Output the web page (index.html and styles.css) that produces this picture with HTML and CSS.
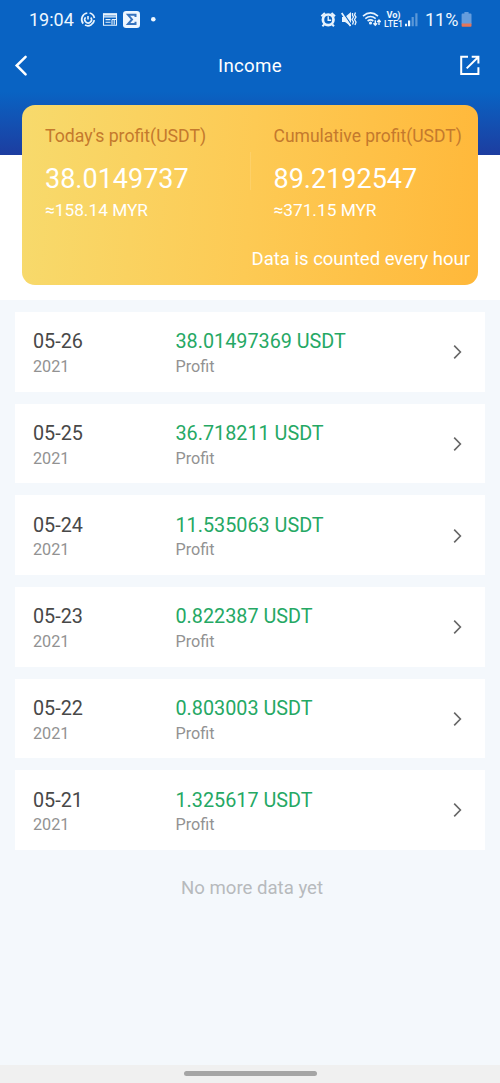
FILE: index.html
```html
<!DOCTYPE html>
<html lang="en">
<head>
<meta charset="utf-8">
<title>Income</title>
<link rel="stylesheet" href="styles.css">
</head>
<body>
<div class="screen">
  <div class="hero">
    <div class="status">
      <span class="clock">19:04</span>
      <svg class="status-left" width="80" height="28" viewBox="78 6 80 28" fill="none" stroke="#e8f3fd">
        <path d="M87.3 13A6.5 6.5 0 0 0 83.2 23.6M85 25.1A6.5 6.5 0 0 0 94.3 20.2M94.4 18A6.5 6.5 0 0 0 89.6 13" stroke-width="1.7"/>
        <path d="M85.6 17.2A3.4 3.4 0 1 0 90.8 17.4M88 16v3.5" stroke-width="1.6"/>
        <path d="M103.5 13.7h13v11.5h-13zM103.5 16.9h13M105.5 19.6h5M105.5 22.2h5M112 19.5h4M112 19.5v5M114.2 19.5v5" stroke-width="1.1"/>
        <path d="M103 14.6h14" stroke-width="2"/>
        <rect x="123" y="11" width="17" height="17" rx="3.2" fill="#eef7ff" stroke="none"/>
        <path d="M135.5 17v-2.2h-7.5l4 4.6-4 4.6h7.5v-2.2" stroke="#3774be" stroke-width="2"/>
        <circle cx="153.3" cy="19.3" r="2.3" fill="#eef7ff" stroke="none"/>
      </svg>
      <div class="status-right">
        <svg width="62" height="28" viewBox="320 6 62 28" fill="none" stroke="#e8f3fd">
          <circle cx="329.2" cy="19.8" r="5.3" stroke-width="2.7"/><path d="M329.2 16.3v3.9h3" stroke-width="1.4"/><path d="M322.4 16.2l3.5-3.3M336 16.2l-3.5-3.3M325.2 24.5l-1.8 1.8M333.2 24.5l1.8 1.8" stroke-width="2"/>
          <path d="M343 17h3l6-5v14.2L346 22h-3z" fill="#e8f3fd" stroke="none"/>
          <path d="M344 12.6l8.8 12.8" stroke="#0963c3" stroke-width="1.3"/><path d="M342.7 13.1l8.8 12.8" stroke-width="1.7"/>
          <path d="M353.5 13v2.3l1 1.7-1.5 2.5 1.5 2.3-1 2.7M356.5 12.5l-1 2.5 1.5 2-1.5 2.5 1.5 2.5-1 3" stroke-width="1.3"/>
          <path d="M364 16.2Q371.5 9.7 379 16.2M366.3 18.6Q371.5 14.4 376.7 18.6M368.6 21Q371.5 18.8 374.3 21" stroke-width="1.6"/>
          <circle cx="371.5" cy="23" r="1.6" fill="#e8f3fd" stroke="none"/>
          <path d="M376.3 20.3v5M374.5 23.3l1.8 2 1.8-2M380 25v-5M378.2 22l1.8-2 1.8 2" stroke-width="1.4"/>
        </svg>
        <span class="network"><span class="volte">Vo)</span><span>LTE1</span></span>
        <svg width="14" height="28" viewBox="405 6 14 28"><path fill="#eef7ff" d="M406 23.7h2v2.5h-2zM409 20.6h2.2v5.6H409z"/><path fill="#5c98d8" d="M412.6 17h2.2v9.2h-2.2zM416.3 13.3h2.2v12.9h-2.2z"/></svg>
        <span class="percent">11%</span>
        <svg width="12" height="28" viewBox="460 6 12 28"><path d="M464.4 12h4.2v1.5h1.9q1 0 1 1v9.5h-9.9v-9.5q0-1 1-1h1.8z" fill="#669ddd"/><path d="M461.6 23.5h9.9v2.6q0 .7-.8.7h-8.3q-.8 0-.8-.7z" fill="#e67559"/></svg>
      </div>
    </div>
    <header class="nav">
      <svg width="24" height="28" viewBox="10 51 24 28" fill="none" stroke="#fff" stroke-width="2.5" stroke-linecap="round"><path d="M25.6 56.8L16.7 65.5L25.6 74.3"/></svg>
      <h1>Income</h1>
      <svg width="24" height="28" viewBox="458 51 24 28" fill="none" stroke="#fff" stroke-width="2"><path d="M468 56.8h-6.8v17.1h17.2v-6.7M471.7 56.8h6.7v6.6M478 57.2L466.7 68.4"/></svg>
    </header>
    <section class="card">
      <div class="stats">
        <div class="stat"><p class="label">Today's profit(USDT)</p><p class="amount">38.0149737</p><p class="local">≈158.14 MYR</p></div>
        <div class="divider"></div>
        <div class="stat second"><p class="label">Cumulative profit(USDT)</p><p class="amount">89.2192547</p><p class="local">≈371.15 MYR</p></div>
      </div>
      <p class="note">Data is counted every hour</p>
    </section>
  </div>
  <main class="list">
    <article class="row"><div class="date"><p class="main-text">05-26</p><p class="sub">2021</p></div><div class="profit"><p class="main-text green">38.01497369 USDT</p><p class="sub">Profit</p></div><svg class="chevron" viewBox="0 0 10 16"><path d="M1.2 1.6L7.4 8L1.2 14.4"/></svg></article>
    <article class="row"><div class="date"><p class="main-text">05-25</p><p class="sub">2021</p></div><div class="profit"><p class="main-text green">36.718211 USDT</p><p class="sub">Profit</p></div><svg class="chevron" viewBox="0 0 10 16"><path d="M1.2 1.6L7.4 8L1.2 14.4"/></svg></article>
    <article class="row"><div class="date"><p class="main-text">05-24</p><p class="sub">2021</p></div><div class="profit"><p class="main-text green">11.535063 USDT</p><p class="sub">Profit</p></div><svg class="chevron" viewBox="0 0 10 16"><path d="M1.2 1.6L7.4 8L1.2 14.4"/></svg></article>
    <article class="row"><div class="date"><p class="main-text">05-23</p><p class="sub">2021</p></div><div class="profit"><p class="main-text green">0.822387 USDT</p><p class="sub">Profit</p></div><svg class="chevron" viewBox="0 0 10 16"><path d="M1.2 1.6L7.4 8L1.2 14.4"/></svg></article>
    <article class="row"><div class="date"><p class="main-text">05-22</p><p class="sub">2021</p></div><div class="profit"><p class="main-text green">0.803003 USDT</p><p class="sub">Profit</p></div><svg class="chevron" viewBox="0 0 10 16"><path d="M1.2 1.6L7.4 8L1.2 14.4"/></svg></article>
    <article class="row"><div class="date"><p class="main-text">05-21</p><p class="sub">2021</p></div><div class="profit"><p class="main-text green">1.325617 USDT</p><p class="sub">Profit</p></div><svg class="chevron" viewBox="0 0 10 16"><path d="M1.2 1.6L7.4 8L1.2 14.4"/></svg></article>
    <p class="end">No more data yet</p>
  </main>
  <footer class="home"><div class="handle"></div></footer>
</div>
</body>
</html>
```
FILE: styles.css
```css
* { box-sizing: border-box; }
body, p, h1 { margin: 0; }
body { font-family: Roboto, "Liberation Sans", sans-serif; }
svg { display: block; flex: none; }
.screen { display: flex; flex-direction: column; width: 500px; height: 1083px; overflow: hidden; background: #f4f8fc; }
.hero { height: 300px; flex: none; background: linear-gradient(#0963c3 0, #0963c3 92px, #1d3da0 155px, #fff 155px); }
.status { height: 40px; padding: 6px 28px 0 29px; display: flex; color: #eef7ff; }
.clock { width: 49px; font-size: 18px; line-height: 28px; }
.status-right { margin-left: auto; display: flex; }
.network { width: 23px; padding: 5px 0 0 2px; display: flex; flex-direction: column; align-items: center; font-size: 8.8px; font-weight: 500; line-height: 8.5px; }
.volte { font-size: 9.2px; font-weight: 700; }
.percent { width: 42px; padding-left: 7px; font-size: 18px; line-height: 28px; white-space: nowrap; }
.nav { height: 65px; padding: 11px 18px 0 10px; display: flex; justify-content: space-between; }
.nav h1 { padding-left: 8px; font-size: 18.7px; font-weight: 400; line-height: 30px; letter-spacing: .3px; color: #fff; }
.card { width: 456px; height: 180px; margin-left: 22px; padding: 20px 8px 0 23px; border-radius: 13px; background: linear-gradient(94deg, #f7da6c, #fdca54 50%, #ffb83a); color: #fff; }
.stats { display: flex; height: 122px; }
.stat { width: 205px; white-space: nowrap; }
.second { padding-left: 22.5px; }
.divider { width: 1px; height: 38px; margin-top: 27px; background: rgb(255 255 255 / 12%); }
.label { font-size: 17.7px; line-height: 22px; color: #c4792d; }
.second .label { font-size: 17.5px; }
.amount { margin-top: 15px; font-size: 27px; line-height: 34px; }
.local { margin-top: 3px; font-size: 17.3px; line-height: 22px; }
.note { font-size: 18.5px; line-height: 24px; text-align: right; }
.list { flex: 1; padding: 12px 15px 0; display: flex; flex-direction: column; gap: 12px; }
.row { height: 79.65px; padding: 18.4px 22px 0 18px; display: flex; background: #fff; }
.date { width: 142.5px; }
.main-text { font-size: 19.8px; line-height: 24px; color: #484848; }
.main-text.green { color: #25a864; }
.sub { margin-top: 1.6px; font-size: 16.2px; line-height: 22px; color: #929292; }
.chevron { width: 10px; height: 16px; margin: 13.9px 0 0 auto; fill: none; stroke: #666; stroke-width: 1.6; }
.end { margin-top: 14px; padding-left: 4px; text-align: center; font-size: 18.6px; line-height: 24px; color: #b7babd; }
.home { height: 18px; padding-top: 6px; background: #f0f0f0; }
.handle { width: 133px; height: 5px; margin: 0 auto; border-radius: 3px; background: #a5a5a5; }
```
